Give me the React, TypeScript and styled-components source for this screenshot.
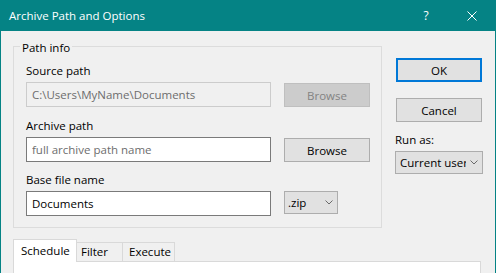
import styled, { createGlobalStyle } from "styled-components"

const accent = "#058385"

const GlobalStyle = createGlobalStyle`
    html, body {
        margin: 0;
        padding: 0;
        background: #f0f0f0;
    }
    body {
        font-family: "Open Sans", "Noto Sans", sans-serif;
        font-size: 11.5px;
        color: #000;
    }
    * {
        box-sizing: border-box;
    }
`

const Window = styled.div`
    width: 496px;
    height: 273px;
    overflow: hidden;
    display: flex;
    flex-direction: column;
    background: #f0f0f0;
    border-left: 1px solid ${accent};
    border-right: 1px solid ${accent};
`

const TitleBar = styled.div`
    display: flex;
    align-items: center;
    height: 31px;
    flex-shrink: 0;
    padding-left: 8px;
    background: ${accent};
    color: #fff;
`

const Title = styled.div`
    flex: 1;
    line-height: 16px;
`

const CaptionButton = styled.div`
    width: 46px;
    height: 31px;
    display: flex;
    align-items: center;
    justify-content: center;
    font-size: 12px;
    color: #fff;
`

const Body = styled.div`
    padding: 6px 0 0 12px;
`

const Top = styled.div`
    display: grid;
    grid-template-columns: 369px 88px;
    column-gap: 13px;
    align-items: start;
`

const Group = styled.fieldset`
    margin: 0;
    min-width: 0;
    padding: 7px 11px 11px 12px;
    border: 1px solid #dcdcdc;
`

const Legend = styled.legend`
    margin-left: -6px;
    padding: 3px 2px 0;
    line-height: 16px;
`

const Field = styled.div<{ $gap?: number }>`
    display: flex;
    flex-direction: column;
    margin-top: ${p => p.$gap ?? 0}px;
`

const Label = styled.div`
    line-height: 16px;
`

const Row = styled.div`
    display: flex;
    align-items: flex-start;
    gap: 13px;
    margin-top: 3px;
`

const TextBox = styled.input`
    width: 245px;
    height: 25px;
    margin: 0;
    padding: 0 5px 1px;
    font: inherit;
    color: #000;
    background: #fff;
    border: 1px solid #7a7a7a;
    outline: none;

    &::placeholder {
        color: #6d6d6d;
    }
    &:disabled {
        color: #6d6d6d;
        background: #f0f0f0;
        border-color: #cccccc;
    }
`

const Button = styled.button<{ $primary?: boolean; $top?: number }>`
    width: 86px;
    height: 24px;
    margin: ${p => p.$top ?? 0}px 0 0;
    padding: 0;
    font: inherit;
    color: #000;
    background: #e1e1e1;
    border: ${p => (p.$primary ? "2px solid #0078d7" : "1px solid #adadad")};

    &:disabled {
        color: #838383;
        background: #cccccc;
        border-color: #bfbfbf;
    }
`

const Side = styled.div`
    display: flex;
    flex-direction: column;
    padding-top: 21px;

    & > ${Button} {
        margin-left: 1px;
    }
`

const SideLabel = styled(Label)`
    margin-top: 10px;
`

const Combo = styled.div<{ $width: number; $top?: number }>`
    display: flex;
    align-items: center;
    width: ${p => p.$width}px;
    height: 23px;
    margin-top: ${p => p.$top ?? 0}px;
    padding-left: ${p => (p.$width > 60 ? 4 : 3)}px;
    background: #e1e1e1;
    border: 1px solid #adadad;

    & .combo-text {
        flex: 1;
        overflow: hidden;
        white-space: nowrap;
        line-height: 16px;
    }
    & .combo-arrow {
        width: 16px;
        display: flex;
        justify-content: center;
        flex-shrink: 0;
    }
`

const Tabs = styled.div`
    width: 468px;
    margin-top: 11px;
`

const TabStrip = styled.div`
    display: flex;
    align-items: flex-end;
    position: relative;
    z-index: 1;
    margin-bottom: -1px;
`

const Tab = styled.div<{ $width: number; $pad: number; $active?: boolean }>`
    display: flex;
    align-items: center;
    width: ${p => p.$width}px;
    height: ${p => (p.$active ? 23 : 20)}px;
    padding-left: ${p => p.$pad}px;
    line-height: 16px;
    background: ${p => (p.$active ? "#fff" : "#f0f0f0")};
    border: 1px solid #d9d9d9;
    border-bottom: ${p => (p.$active ? "none" : "1px solid #d9d9d9")};
    position: relative;
    z-index: ${p => (p.$active ? 2 : 1)};

    & + & {
        margin-left: -1px;
    }
`

const TabPanel = styled.div`
    height: 40px;
    background: #fff;
    border: 1px solid #d9d9d9;
`

const Chevron = () => (
    <svg width="8" height="5" viewBox="0 0 8 5">
        <polyline points="0.5,0.5 4,4 7.5,0.5" fill="none" stroke="#6a6a6a" strokeWidth="1" />
    </svg>
)

const ComboBox = ({ text, width, top }: { text: string; width: number; top?: number }) => (
    <Combo $width={width} $top={top}>
        <span className="combo-text">{text}</span>
        <span className="combo-arrow">
            <Chevron />
        </span>
    </Combo>
)

export default function App() {
    return (
        <>
            <GlobalStyle />
            <Window>
                <TitleBar>
                    <Title>Archive Path and Options</Title>
                    <CaptionButton>?</CaptionButton>
                    <CaptionButton>
                        <svg width="10" height="10" viewBox="0 0 10 10">
                            <path d="M0.5 0.5 L9.5 9.5 M9.5 0.5 L0.5 9.5" stroke="#fff" strokeWidth="1" />
                        </svg>
                    </CaptionButton>
                </TitleBar>
                <Body>
                    <Top>
                        <Group>
                            <Legend>Path info</Legend>
                            <Field>
                                <Label>Source path</Label>
                                <Row>
                                    <TextBox disabled value="C:\Users\MyName\Documents" readOnly />
                                    <Button disabled $top={1}>
                                        Browse
                                    </Button>
                                </Row>
                            </Field>
                            <Field $gap={11}>
                                <Label>Archive path</Label>
                                <Row>
                                    <TextBox placeholder="full archive path name" />
                                    <Button $top={1}>Browse</Button>
                                </Row>
                            </Field>
                            <Field $gap={10}>
                                <Label>Base file name</Label>
                                <Row>
                                    <TextBox value="Documents" readOnly />
                                    <ComboBox text=".zip" width={54} />
                                </Row>
                            </Field>
                        </Group>
                        <Side>
                            <Button $primary>OK</Button>
                            <Button $top={16}>Cancel</Button>
                            <SideLabel>Run as:</SideLabel>
                            <ComboBox text="Current user" width={88} top={3} />
                        </Side>
                    </Top>
                    <Tabs>
                        <TabStrip>
                            <Tab $active $width={64} $pad={7}>
                                Schedule
                            </Tab>
                            <Tab $width={47} $pad={4}>
                                Filter
                            </Tab>
                            <Tab $width={53} $pad={6}>
                                Execute
                            </Tab>
                        </TabStrip>
                        <TabPanel />
                    </Tabs>
                </Body>
            </Window>
        </>
    )
}
